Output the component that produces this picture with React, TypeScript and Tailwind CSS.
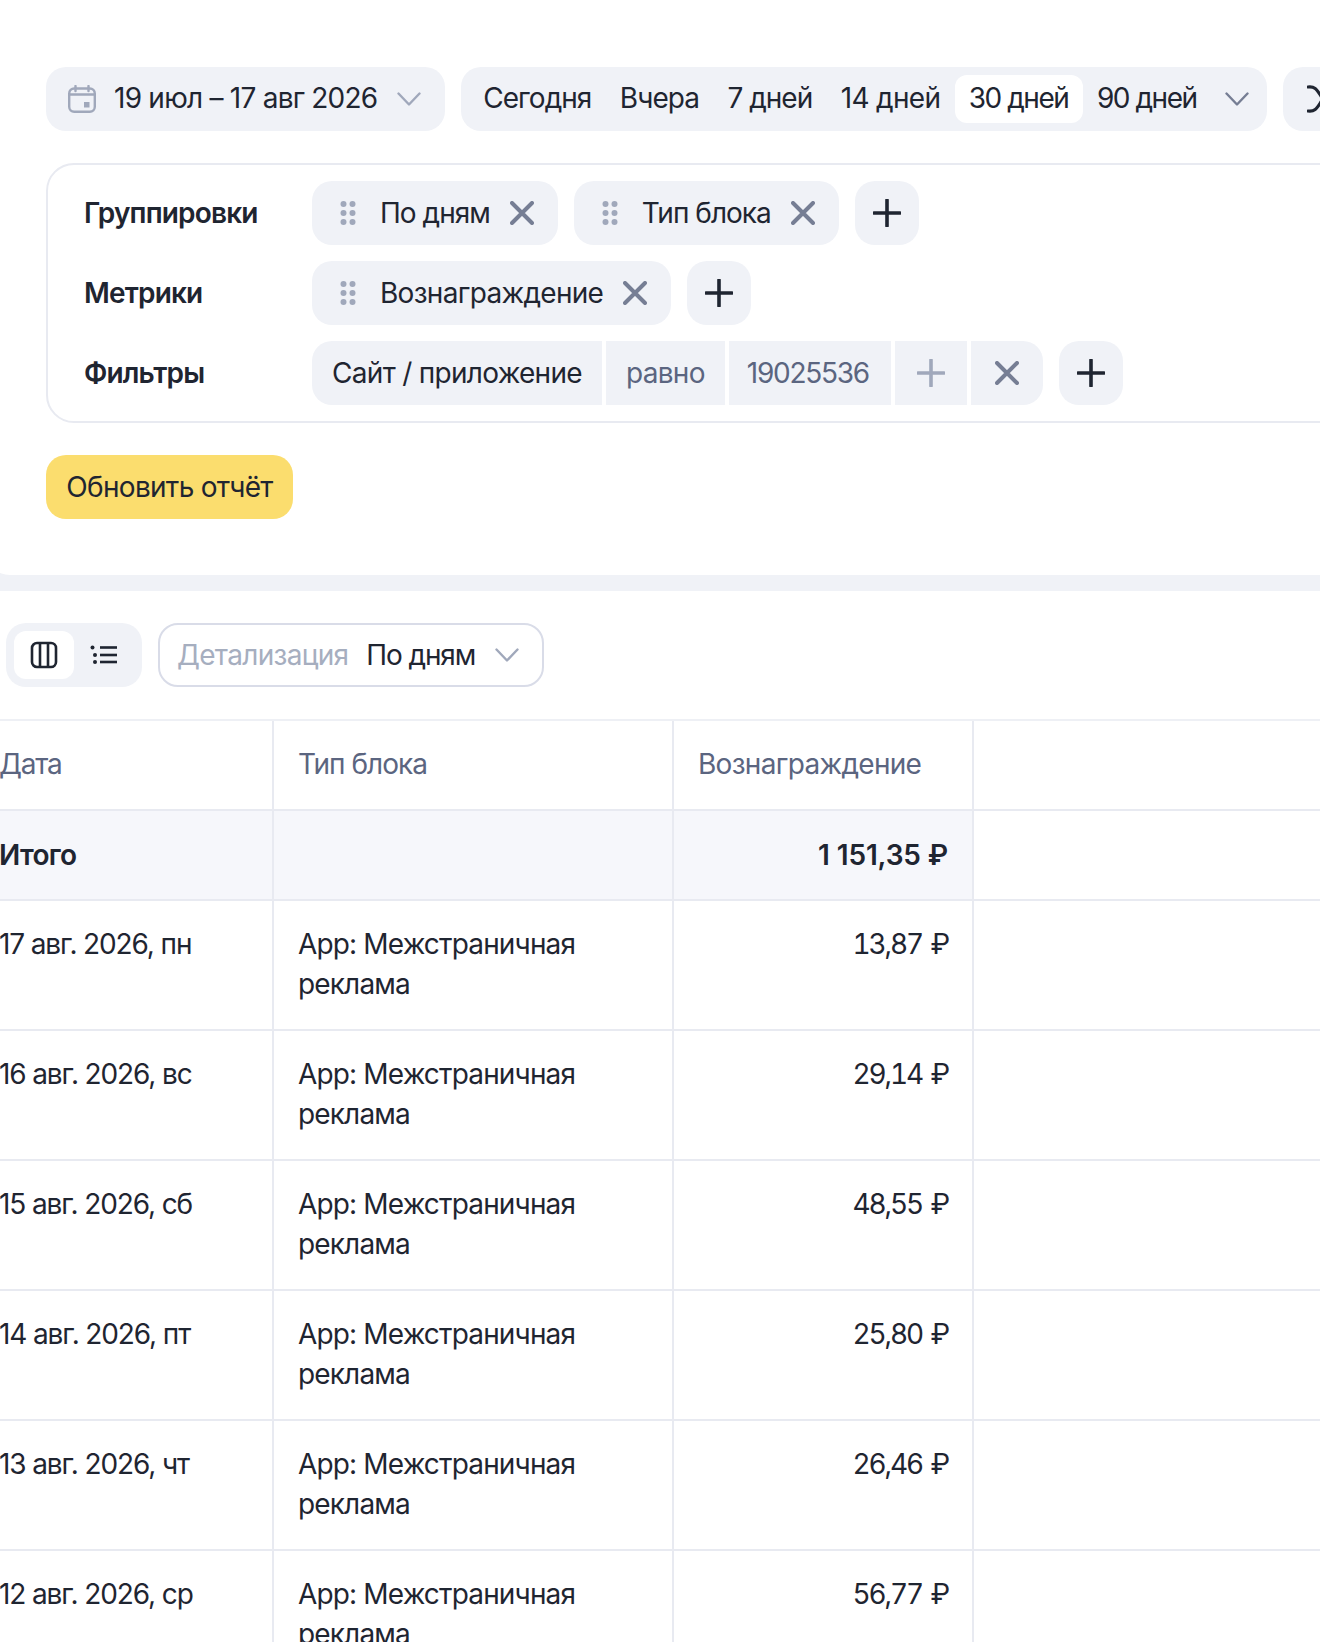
import React from "react";

const rows = [
  { date: "17 авг. 2026, пн", value: "13,87 ₽" },
  { date: "16 авг. 2026, вс", value: "29,14 ₽" },
  { date: "15 авг. 2026, сб", value: "48,55 ₽" },
  { date: "14 авг. 2026, пт", value: "25,80 ₽" },
  { date: "13 авг. 2026, чт", value: "26,46 ₽" },
  { date: "12 авг. 2026, ср", value: "56,77 ₽" },
];

const presets = [
  { label: "Сегодня", tracking: "tracking-[-0.035em]" },
  { label: "Вчера", tracking: "tracking-[-0.035em]" },
  { label: "7 дней", tracking: "tracking-[-0.035em]" },
  { label: "14 дней", tracking: "tracking-[-0.025em]" },
  { label: "30 дней", tracking: "tracking-[-0.052em]" },
  { label: "90 дней", tracking: "tracking-[-0.052em]" },
];

function Chevron({ className }: { className: string }) {
  return (
    <svg width="24" height="14" viewBox="0 0 24 14" fill="none" className={className}>
      <path d="M1.5 1.5 12 12.5 22.5 1.5" stroke="currentColor" strokeWidth="2.4" strokeLinecap="round" strokeLinejoin="round" />
    </svg>
  );
}

function Cross({ className = "text-[#767e94]" }: { className?: string }) {
  return (
    <svg width="24" height="24" viewBox="0 0 24 24" fill="none" className={className}>
      <path d="M2 2 22 22M22 2 2 22" stroke="currentColor" strokeWidth="4" strokeLinecap="round" />
    </svg>
  );
}

function Plus({ className = "text-[#1f2531]" }: { className?: string }) {
  return (
    <svg width="28" height="28" viewBox="0 0 28 28" fill="none" className={className}>
      <path d="M14 1v26M1 14h26" stroke="currentColor" strokeWidth="3.6" strokeLinecap="round" />
    </svg>
  );
}

function Dots() {
  return (
    <svg width="16" height="24" viewBox="0 0 16 24" className="text-[#a0a8bb]" fill="currentColor">
      {[3, 12, 21].map((y) => (
        <g key={y}>
          <circle cx="3.5" cy={y} r="3" />
          <circle cx="12.5" cy={y} r="3" />
        </g>
      ))}
    </svg>
  );
}

function Chip({ label, tight }: { label: string; tight?: boolean }) {
  return (
    <div className="flex h-16 items-center rounded-[20px] bg-[#f0f2f7] pl-[28px] pr-[24px]">
      <Dots />
      <span className={tight ? "ml-[24px] mr-[20px] tracking-[-0.035em]" : "ml-[24px] mr-[20px]"}>{label}</span>
      <Cross />
    </div>
  );
}

function AddButton() {
  return (
    <button className="flex h-16 w-16 items-center justify-center rounded-[20px] bg-[#f0f2f7]">
      <Plus />
    </button>
  );
}

function Label({ children }: { children: React.ReactNode }) {
  return <div className="w-[264px] pl-[36px] font-semibold tracking-[-0.03em]">{children}</div>;
}

export default function App() {
  return (
    <div className="h-[1642px] w-[1320px] overflow-hidden bg-white font-['Inter',sans-serif] text-[28px] leading-10 tracking-[-0.025em] text-[#1f2531]">
      <div className="bg-[#f0f2f7] pb-4">
        <div className="-ml-[14px] w-[1400px] rounded-b-[24px] bg-white pb-14 pl-[60px] pt-[67px]">
          <div className="flex gap-4">
            <div className="flex h-16 w-[399px] shrink-0 items-center rounded-[20px] bg-[#f0f2f7] pl-[22px]">
              <svg width="28" height="28" viewBox="0 0 28 28" fill="none" className="text-[#a0a8bb]">
                <rect x="1.2" y="3.5" width="25.6" height="23.3" rx="5" stroke="currentColor" strokeWidth="2.4" />
                <path d="M7.5 1v5M20.5 1v5M1.5 9.5h25" stroke="currentColor" strokeWidth="2.4" strokeLinecap="round" />
                <rect x="16" y="17" width="5.5" height="5.5" fill="currentColor" />
              </svg>
              <span className="mb-[2px] ml-[18px] whitespace-nowrap tracking-[-0.027em]">19 июл – 17 авг 2026</span>
              <Chevron className="ml-[20px] text-[#a0a8bb]" />
            </div>
            <div className="flex h-16 w-[806px] shrink-0 items-center rounded-[20px] bg-[#f0f2f7] pl-2">
              {presets.map((p) => (
                <div
                  key={p.label}
                  className={
                    p.label === "30 дней"
                      ? "flex h-12 items-center whitespace-nowrap rounded-xl bg-white px-[14.25px] " + p.tracking
                      : "flex h-12 items-center whitespace-nowrap rounded-xl px-[14.25px] " + p.tracking
                  }
                >
                  <span className="mb-[2px]">{p.label}</span>
                </div>
              ))}
              <Chevron className="ml-[14px] text-[#767e94]" />
            </div>
            <div className="flex h-16 w-[120px] shrink-0 items-center rounded-[20px] bg-[#f0f2f7] pl-[24px]">
              <svg width="40" height="30" viewBox="0 0 40 30" fill="none" className="shrink-0 text-[#1f2531]">
                <path d="M1 3c7-1 9 3 13 9 4 6 7 12 14 15M1 27c7 1 9-3 13-9 4-6 7-12 14-15" stroke="currentColor" strokeWidth="3.2" strokeLinecap="round" />
              </svg>
            </div>
          </div>

          <div className="mt-8 flex w-[1400px] flex-col gap-4 rounded-[28px] border-2 border-[#e8eaf1] py-4">
            <div className="flex items-center">
              <Label>Группировки</Label>
              <div className="flex gap-4">
                <Chip label="По дням" tight />
                <Chip label="Тип блока" tight />
                <AddButton />
              </div>
            </div>
            <div className="flex items-center">
              <Label>Метрики</Label>
              <div className="flex gap-4">
                <Chip label="Вознаграждение" />
                <AddButton />
              </div>
            </div>
            <div className="flex items-center">
              <Label>Фильтры</Label>
              <div className="flex gap-4">
                <div className="flex h-16 gap-1">
                  <div className="flex items-center whitespace-nowrap rounded-l-[20px] bg-[#f0f2f7] px-5">Сайт / приложение</div>
                  <div className="flex items-center bg-[#f0f2f7] px-5 text-[#5b6580]">равно</div>
                  <div className="flex items-center bg-[#f0f2f7] pl-[18px] pr-[22px] tracking-[-0.045em] text-[#5b6580]">19025536</div>
                  <div className="flex w-[72px] items-center justify-center bg-[#f0f2f7]">
                    <Plus className="text-[#a0a8bb]" />
                  </div>
                  <div className="flex w-[72px] items-center justify-center rounded-r-[20px] bg-[#f0f2f7]">
                    <Cross />
                  </div>
                </div>
                <AddButton />
              </div>
            </div>
          </div>

          <button className="mt-8 flex h-16 w-[247px] items-center justify-center rounded-[20px] bg-[#fbdd6e] text-[#1f2531]">
            Обновить отчёт
          </button>
        </div>
      </div>

      <div className="mt-8 flex gap-4 pl-[6px]">
        <div className="flex h-16 w-[136px] items-center rounded-[20px] bg-[#f0f2f7] pl-2">
          <div className="flex h-12 w-[60px] items-center justify-center rounded-xl bg-white">
            <svg width="28" height="28" viewBox="0 0 28 28" fill="none" className="text-[#1f2531]">
              <rect x="2" y="2" width="24" height="24" rx="5" stroke="currentColor" strokeWidth="2.6" />
              <path d="M10 2v24M18 2v24" stroke="currentColor" strokeWidth="2.6" />
            </svg>
          </div>
          <svg width="28" height="20" viewBox="0 0 28 20" fill="currentColor" className="ml-4 text-[#1f2531]">
            <circle cx="2.5" cy="2.5" r="2" />
            <circle cx="5" cy="10" r="2" />
            <circle cx="5" cy="17" r="2" />
            <rect x="10" y="1.2" width="17" height="2.6" />
            <rect x="10" y="8.7" width="17" height="2.6" />
            <rect x="10" y="15.7" width="17" height="2.6" />
          </svg>
        </div>
        <div className="flex h-16 w-[386px] items-center rounded-[20px] border-2 border-[#d9dce8] pl-[17px]">
          <span className="text-[#a6aebf]">Детализация</span>
          <span className="ml-[18px] tracking-[-0.04em]">По дням</span>
          <Chevron className="ml-[20px] text-[#a0a8bb]" />
        </div>
      </div>

      <div className="mt-8 border-t-2 border-[#eef0f5]">
        <div className="grid h-[90px] grid-cols-[274px_400px_300px_1fr] border-b-2 border-[#e8eaf1] text-[#5b6580]">
          <div className="flex items-center border-r-2 border-[#e8eaf1] pb-[2px] tracking-[-0.045em]">
            <span className="-ml-px">Дата</span>
          </div>
          <div className="flex items-center border-r-2 border-[#e8eaf1] pb-[2px] pl-[24px] tracking-[-0.035em]">Тип блока</div>
          <div className="flex items-center border-r-2 border-[#e8eaf1] pb-[2px] pl-[24px]">Вознаграждение</div>
          <div />
        </div>
        <div className="grid h-[90px] grid-cols-[274px_400px_300px_1fr] border-b-2 border-[#e8eaf1] font-semibold">
          <div className="flex items-center border-r-2 border-[#e8eaf1] bg-[#f6f7fb]">
            <span className="-ml-px">Итого</span>
          </div>
          <div className="border-r-2 border-[#e8eaf1] bg-[#f6f7fb]" />
          <div className="flex items-center justify-end whitespace-pre border-r-2 border-[#e8eaf1] bg-[#f6f7fb] pr-[24px] tracking-[-0.005em]">
            1 151,35 ₽
          </div>
          <div />
        </div>
        {rows.map((r) => (
          <div key={r.date} className="grid h-[130px] grid-cols-[274px_400px_300px_1fr] border-b-2 border-[#e8eaf1]">
            <div className="whitespace-nowrap border-r-2 border-[#e8eaf1] pt-[23px] tracking-[-0.04em]">
              <span className="-ml-px">{r.date}</span>
            </div>
            <div className="border-r-2 border-[#e8eaf1] pl-[24px] pt-[23px] tracking-[-0.03em]">
              App: Межстраничная
              <br />
              реклама
            </div>
            <div className="border-r-2 border-[#e8eaf1] pr-[24px] pt-[23px] text-right tabular-nums tracking-[-0.075em] [word-spacing:3px]">{r.value}</div>
            <div />
          </div>
        ))}
      </div>
    </div>
  );
}
